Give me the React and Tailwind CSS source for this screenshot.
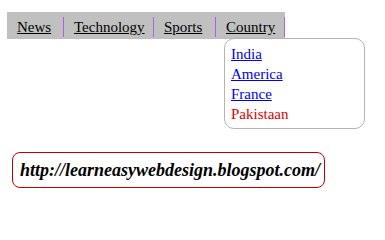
export default function App() {
  const items = [
    { label: "News", w: "w-[57px]" },
    { label: "Technology", w: "w-[90px]" },
    { label: "Sports", w: "w-[62px]" },
    { label: "Country", w: "w-[69px]" },
  ];

  return (
    <div className="relative w-[385px] h-[239px] bg-white text-black font-['Liberation_Serif','Times_New_Roman',serif]">
      {/* Menu bar */}
      <div className="pt-[12px] pl-[7px]">
        <nav className="flex w-fit items-start bg-[#c0c0c0] pt-[5px] pb-[2px]">
          {items.map((item) => (
            <a
              key={item.label}
              href="#"
              className={`${item.w} block pl-[10px] border-r border-[#b25ee8] text-[15px] leading-[20px] underline`}
            >
              {item.label}
            </a>
          ))}
        </nav>
      </div>

      {/* Country dropdown */}
      <div className="absolute left-[224px] top-[38px] w-[141px] h-[91px] border border-[#b4b4b4] rounded-[10px] bg-white pt-[5px] pl-[6px] text-[15px] leading-[20px]">
        <a href="#" className="block text-[#0000ee] underline">India</a>
        <a href="#" className="block text-[#0000ee] underline">America</a>
        <a href="#" className="block text-[#0000ee] underline">France</a>
        <a href="#" className="block text-[#e00000]">Pakistaan</a>
      </div>

      {/* URL box */}
      <div className="mt-[113px] ml-[12px] flex h-[36px] w-[313px] items-center border border-[#c00000] rounded-[8px] pl-[7px]">
        <span className="text-[18px] font-bold italic leading-[22px]">
          http://learneasywebdesign.blogspot.com/
        </span>
      </div>
    </div>
  );
}
